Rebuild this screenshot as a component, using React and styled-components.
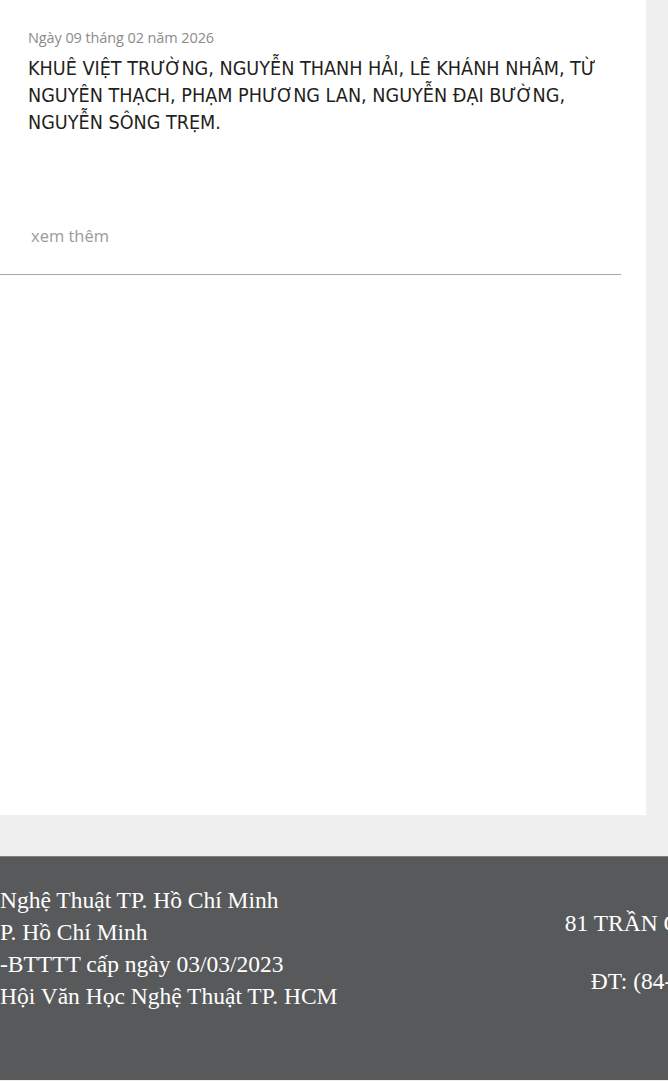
import React from "react";
import styled, { createGlobalStyle } from "styled-components";

const GlobalStyle = createGlobalStyle`
  html, body { margin: 0; padding: 0; background: #f0f0f0; }
  body { font-family: "Open Sans", "Liberation Sans", sans-serif; }
  #root { min-height: 100vh; }
`;

const Page = styled.div`
  background: #f0f0f0;
  overflow: hidden;
`;

const Panel = styled.main`
  width: 646px;
  height: 815px;
  background: #ffffff;
  box-sizing: border-box;
  padding-right: 25px;
`;

const Article = styled.article`
  padding: 28px 0 0 28px;
`;

const DateText = styled.div`
  font-family: "Open Sans", "Liberation Sans", sans-serif;
  font-size: 14.5px;
  line-height: 20px;
  letter-spacing: -0.1px;
  color: #8c8c8c;
`;

const Title = styled.h2`
  margin: 7px 0 0;
  font-family: "Liberation Sans Narrow", "DejaVu Sans Condensed", "Liberation Sans", sans-serif;
  font-weight: 400;
  font-size: 19.6px;
  line-height: 27px;
  color: #231f20;
`;

const MoreLink = styled.a`
  display: block;
  margin: 88px 0 0 3px;
  font-family: "Open Sans", "Liberation Sans", sans-serif;
  font-size: 16.5px;
  line-height: 24px;
  color: #9a9a9a;
  text-decoration: none;
`;

const Divider = styled.hr`
  margin: 26px 0 0;
  border: 0;
  border-top: 1px solid #a8a8a8;
  height: 0;
`;

const Gap = styled.div`
  height: 41px;
`;

const Footer = styled.footer`
  background: #58595b;
  border-top: 1px solid #808080;
  height: 224px;
  overflow: hidden;
  box-sizing: border-box;
`;

const FooterInner = styled.div`
  display: flex;
  align-items: flex-start;
  padding-top: 27px;
  font-family: "Liberation Serif", "Times New Roman", serif;
  color: #ffffff;
  font-size: 23.5px;
`;

const LeftCol = styled.div`
  flex: 0 0 430px;
  display: flex;
  flex-direction: column;
`;

const Line = styled.div`
  display: flex;
  line-height: 32px;
  white-space: pre;
`;

const Cut = styled.span`
  flex: 0 0 0;
  width: 0;
  direction: rtl;
  white-space: nowrap;
`;

const RightCol = styled.div`
  flex: 0 0 552px;
  display: flex;
  flex-direction: column;
  gap: 26px;
  padding-top: 23px;
  text-align: center;
  line-height: 32px;
  white-space: nowrap;
`;

const footerLines = [
  ["Trang thông tin điện tử Hội Văn Học", "Nghệ Thuật TP. Hồ Chí Minh"],
  ["Địa chỉ: 81 Trần Quốc Thảo, Quận 3, T", "P. Hồ Chí Minh"],
  ["Giấy phép số 115/GP", "-BTTTT cấp ngày 03/03/2023"],
  ["Chịu trách nhiệm: Thường trực", "Hội Văn Học Nghệ Thuật TP. HCM"],
];

export default function App() {
  return (
    <Page>
      <GlobalStyle />
      <Panel>
        <Article>
          <DateText>Ngày 09 tháng 02 năm 2026</DateText>
          <Title>
            KHUÊ VIỆT TRƯỜNG, NGUYỄN THANH HẢI, LÊ KHÁNH NHÂM, TỪ NGUYÊN
            THẠCH, PHẠM PHƯƠNG LAN, NGUYỄN ĐẠI BƯỜNG, NGUYỄN SÔNG TRẸM.
          </Title>
          <MoreLink href="#">xem thêm</MoreLink>
        </Article>
        <Divider />
      </Panel>
      <Gap />
      <Footer>
        <FooterInner>
          <LeftCol>
            {footerLines.map(([hidden, shown]) => (
              <Line key={shown}>
                <Cut>{hidden}</Cut>
                <span>{shown}</span>
              </Line>
            ))}
          </LeftCol>
          <RightCol>
            <div>81 TRẦN QUỐC THẢO, Q.3</div>
            <div>ĐT: (84-028) 3930 5294</div>
          </RightCol>
        </FooterInner>
      </Footer>
    </Page>
  );
}
